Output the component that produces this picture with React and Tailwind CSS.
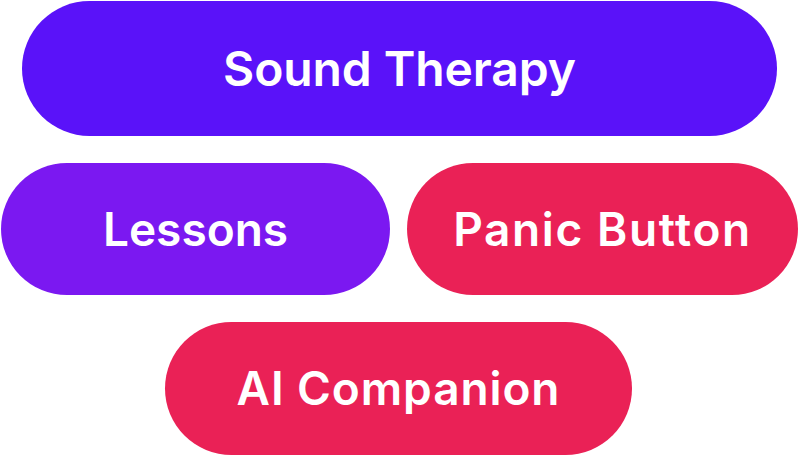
const Pill = ({ label, className }) => (
  <div
    className={`flex items-center justify-center rounded-full text-white font-semibold ${className}`}
  >
    {label}
  </div>
);

export default function App() {
  return (
    <div
      className="w-[800px] h-[457px] bg-white flex flex-col pt-px"
      style={{ fontFamily: 'Inter, "Noto Sans", sans-serif' }}
    >
      <div className="pl-[22px]">
        <Pill label="Sound Therapy" className="w-[755px] h-[135px] bg-[#5a12f9] text-[48px] tracking-[-0.1px]" />
      </div>
      <div className="flex gap-[17px] pl-px mt-[27px]">
        <Pill label="Lessons" className="w-[389px] h-[132px] bg-[#7b18f1] text-[46px]" />
        <Pill label="Panic Button" className="w-[391px] h-[132px] bg-[#ea2156] text-[46px] tracking-[1.6px]" />
      </div>
      <div className="pl-[165px] mt-[27px]">
        <Pill label="AI Companion" className="w-[467px] h-[133px] bg-[#ea2156] text-[46px] tracking-[0.9px]" />
      </div>
    </div>
  );
}
